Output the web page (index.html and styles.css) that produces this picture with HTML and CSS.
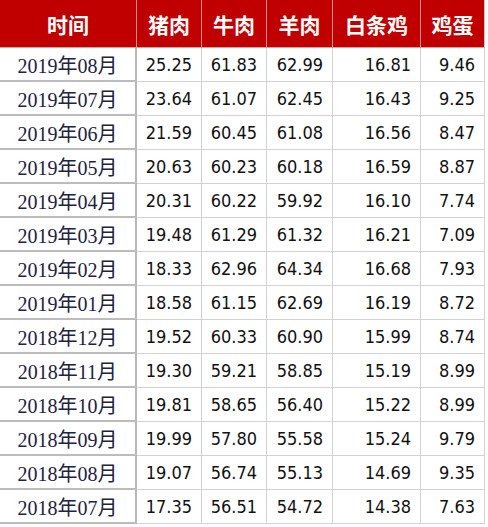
FILE: index.html
```html
<!DOCTYPE html>
<html lang="zh">
<head>
<meta charset="utf-8">
<title>价格表</title>
<link rel="stylesheet" href="styles.css">
</head>
<body>
<table class="price">
  <colgroup>
    <col class="c-date"><col class="c-n"><col class="c-n"><col class="c-n4"><col class="c-w"><col class="c-e">
  </colgroup>
  <thead>
    <tr><th>时间</th><th>猪肉</th><th>牛肉</th><th>羊肉</th><th>白条鸡</th><th>鸡蛋</th></tr>
  </thead>
  <tbody>
    <tr><td class="date">2019年08月</td><td>25.25</td><td>61.83</td><td>62.99</td><td>16.81</td><td>9.46</td></tr>
    <tr><td class="date">2019年07月</td><td>23.64</td><td>61.07</td><td>62.45</td><td>16.43</td><td>9.25</td></tr>
    <tr><td class="date">2019年06月</td><td>21.59</td><td>60.45</td><td>61.08</td><td>16.56</td><td>8.47</td></tr>
    <tr><td class="date">2019年05月</td><td>20.63</td><td>60.23</td><td>60.18</td><td>16.59</td><td>8.87</td></tr>
    <tr><td class="date">2019年04月</td><td>20.31</td><td>60.22</td><td>59.92</td><td>16.10</td><td>7.74</td></tr>
    <tr><td class="date">2019年03月</td><td>19.48</td><td>61.29</td><td>61.32</td><td>16.21</td><td>7.09</td></tr>
    <tr><td class="date">2019年02月</td><td>18.33</td><td>62.96</td><td>64.34</td><td>16.68</td><td>7.93</td></tr>
    <tr><td class="date">2019年01月</td><td>18.58</td><td>61.15</td><td>62.69</td><td>16.19</td><td>8.72</td></tr>
    <tr><td class="date">2018年12月</td><td>19.52</td><td>60.33</td><td>60.90</td><td>15.99</td><td>8.74</td></tr>
    <tr><td class="date">2018年11月</td><td>19.30</td><td>59.21</td><td>58.85</td><td>15.19</td><td>8.99</td></tr>
    <tr><td class="date">2018年10月</td><td>19.81</td><td>58.65</td><td>56.40</td><td>15.22</td><td>8.99</td></tr>
    <tr><td class="date">2018年09月</td><td>19.99</td><td>57.80</td><td>55.58</td><td>15.24</td><td>9.79</td></tr>
    <tr><td class="date">2018年08月</td><td>19.07</td><td>56.74</td><td>55.13</td><td>14.69</td><td>9.35</td></tr>
    <tr><td class="date">2018年07月</td><td>17.35</td><td>56.51</td><td>54.72</td><td>14.38</td><td>7.63</td></tr>
  </tbody>
</table>
</body>
</html>
```
FILE: styles.css
```css
html, body {
  margin: 0;
  padding: 0;
  background: #ffffff;
}

.price {
  border-collapse: separate;
  border-spacing: 0;
  table-layout: fixed;
  width: 485px;
}

.c-date { width: 137px; }
.c-n { width: 65px; }
.c-n4 { width: 66px; }
.c-w { width: 88px; }
.c-e { width: 64px; }

.price th,
.price td {
  padding: 0;
  box-sizing: border-box;
  vertical-align: middle;
}

.price thead tr { height: 48px; }
.price tbody tr { height: 34px; }

.price th {
  background: #c00000;
  color: #ffffff;
  font-family: "Noto Sans CJK SC", sans-serif;
  font-weight: 700;
  font-size: 21px;
  text-align: center;
  border-right: 1px solid #e48c8c;
  border-bottom: 1px solid #d9a0a0;
}

.price th:last-child {
  border-right: 1px solid #c8c8c8;
}

.price td {
  font-family: "DejaVu Sans Condensed", "DejaVu Sans", sans-serif;
  font-size: 18px;
  color: #111111;
  text-align: right;
  padding-right: 9px;
  border-right: 1px solid #d2d2d2;
  border-bottom: 1px solid #d2d2d2;
}

.price td.date {
  font-family: "Liberation Serif", "Noto Sans CJK SC", serif;
  font-size: 20px;
  color: #22223f;
  text-align: center;
  padding-right: 0;
  border-right: 2px solid #b8b8b8;
  border-bottom: 2px solid #bcbcbc;
}
```
